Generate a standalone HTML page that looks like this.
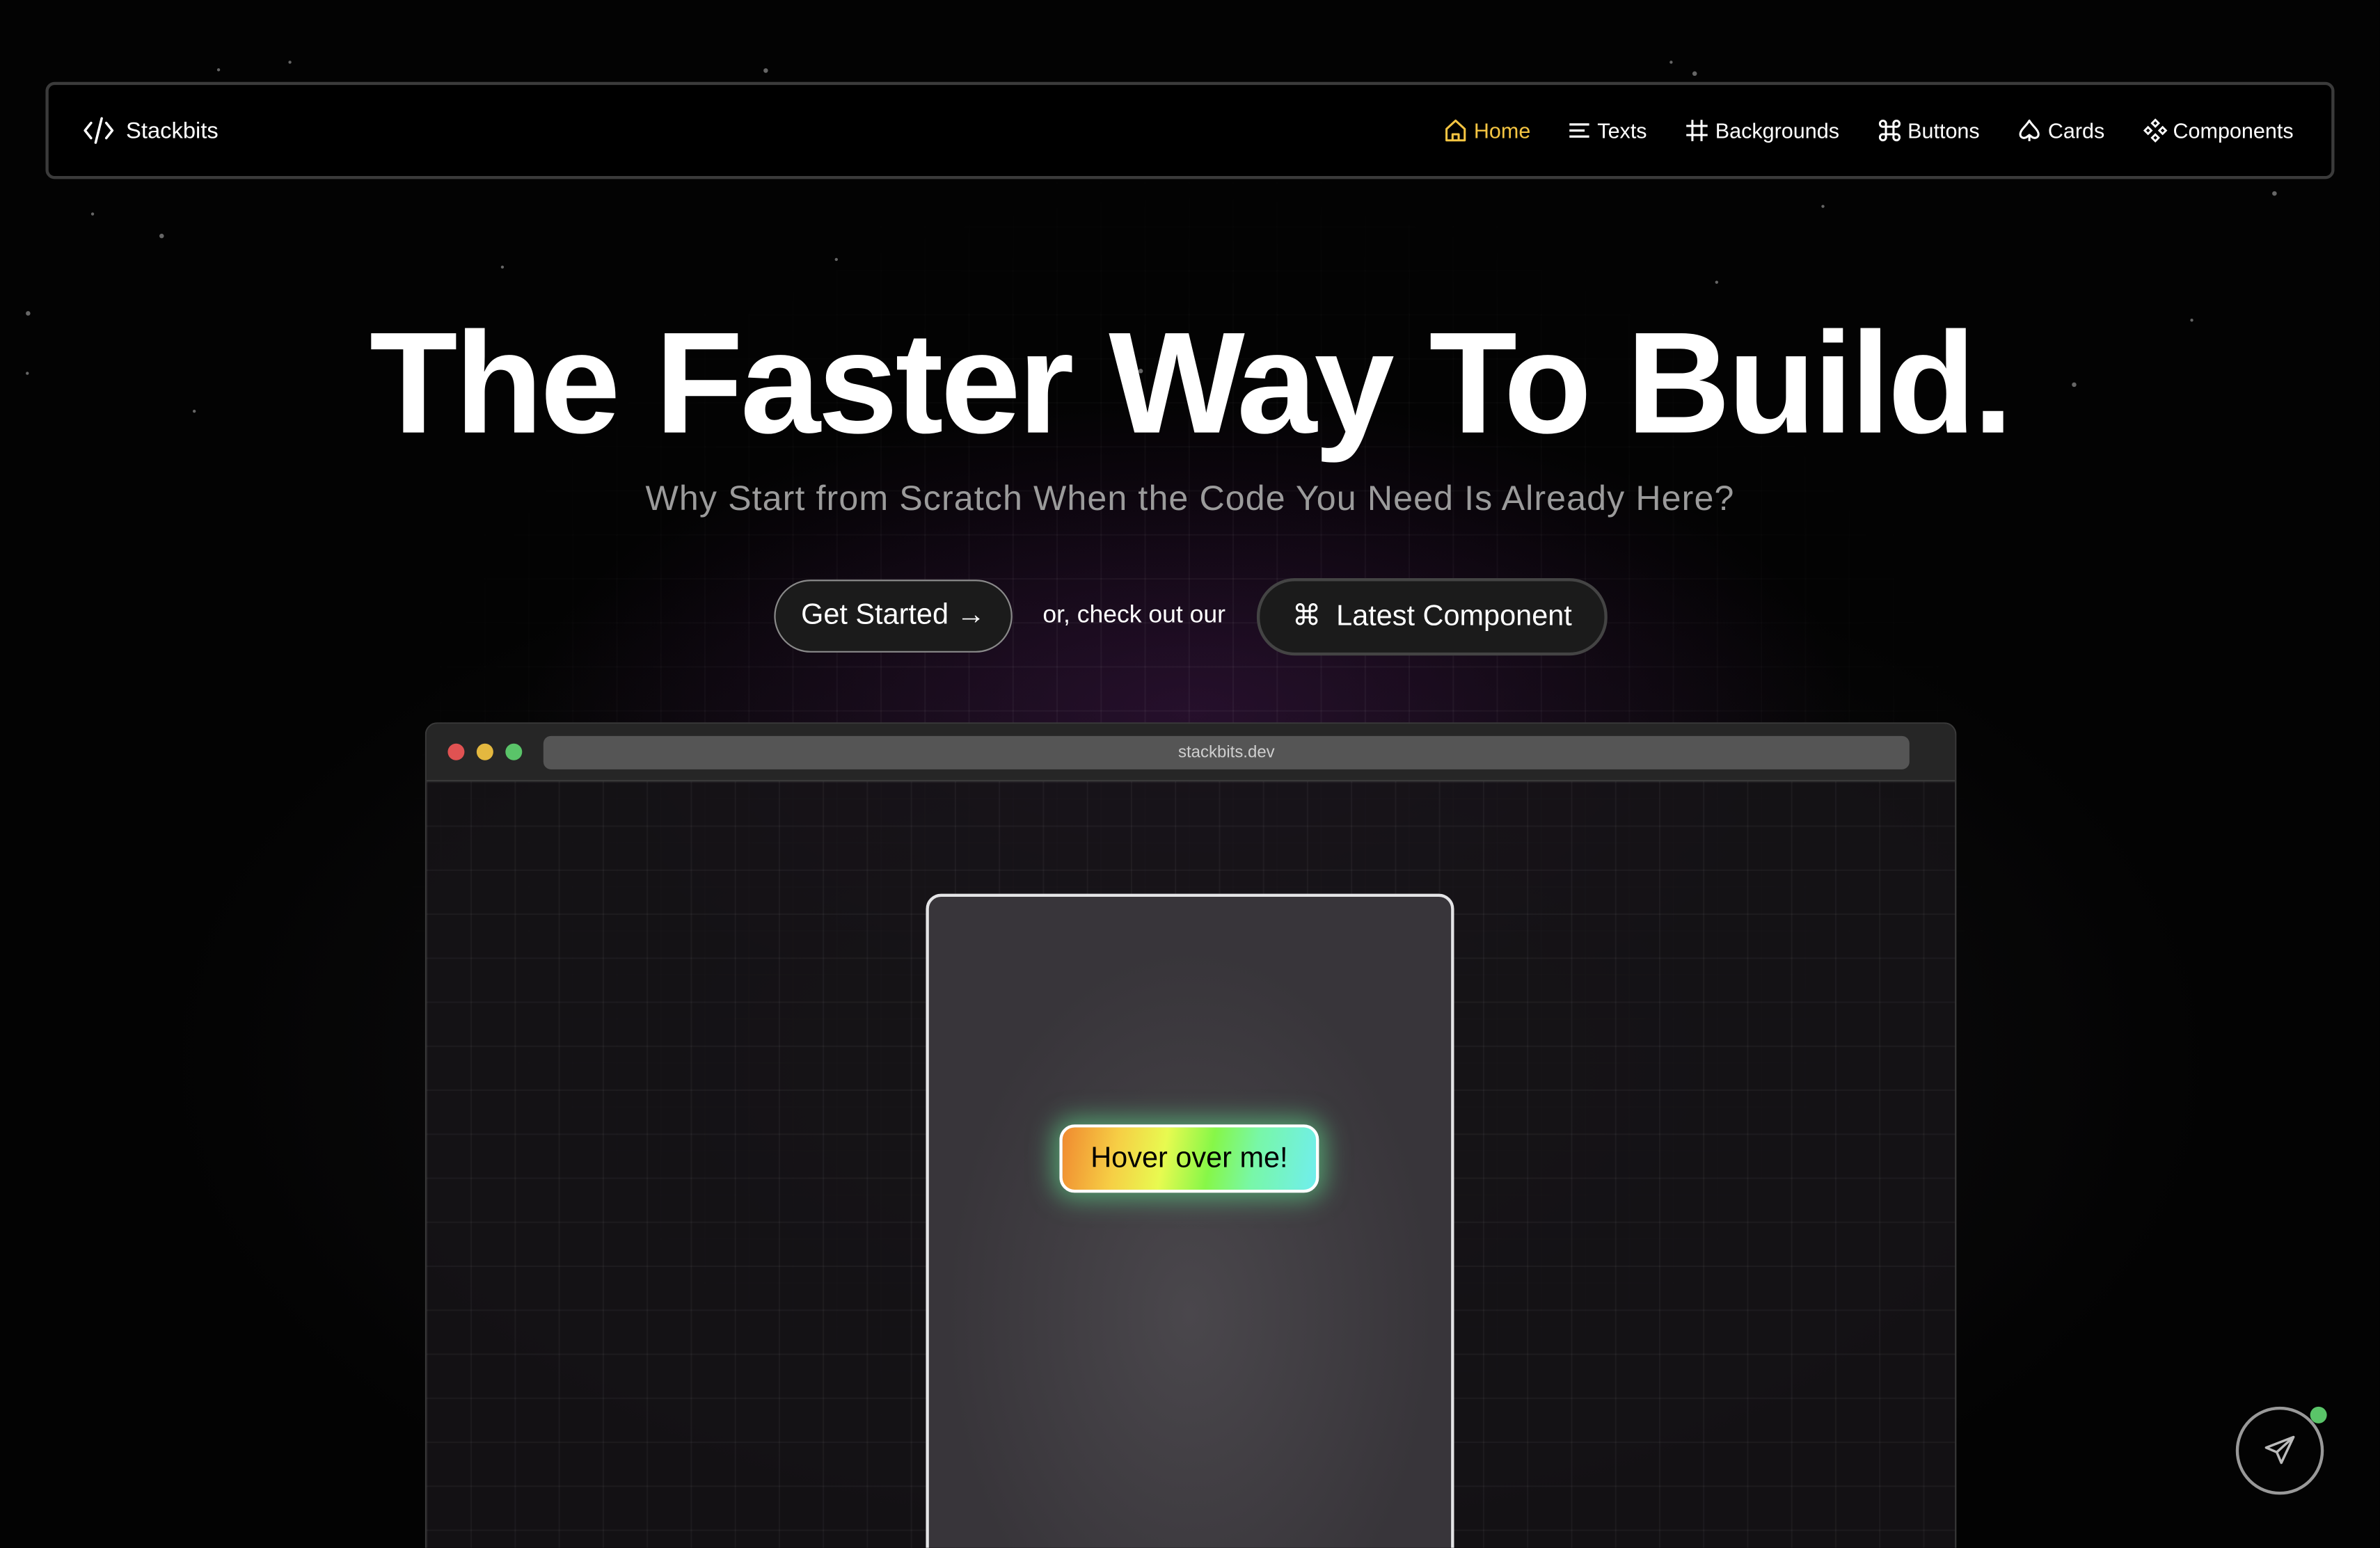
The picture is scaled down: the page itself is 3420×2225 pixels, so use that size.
<!DOCTYPE html>
<html><head><meta charset="utf-8"><style>
html,body{margin:0;padding:0;background:#000;overflow:hidden;width:3420px;height:2224px}
#s{position:absolute;left:0;top:0;width:1568px;height:1020px;transform:scale(2.1811);transform-origin:0 0;font-family:"Liberation Sans",sans-serif;color:#fff;overflow:hidden;
background:radial-gradient(ellipse 620px 300px at 784px 470px,rgba(60,20,70,.55),rgba(0,0,0,0) 70%),radial-gradient(ellipse 900px 500px at 784px 700px,rgba(30,28,32,.7),rgba(0,0,0,0) 75%),#030303}
.grid{position:absolute;left:0;top:120px;width:1568px;height:900px;background-image:linear-gradient(rgba(255,255,255,.045) 1px,transparent 1px),linear-gradient(90deg,rgba(255,255,255,.045) 1px,transparent 1px);background-size:29px 29px;-webkit-mask-image:radial-gradient(ellipse 700px 600px at 784px 450px,#000 30%,transparent 80%)}
.star{position:absolute;width:2px;height:2px;border-radius:50%;background:#666}
.nav{position:absolute;left:30px;top:54px;width:1504px;height:60px;border:2px solid #3b3b3b;border-radius:6px;background:#000}
.logo{position:absolute;left:22px;top:21px;font-size:15px;display:flex;align-items:center;gap:7px}
.items{position:absolute;right:25px;top:22px;display:flex;gap:25px;font-size:14px}
.items span{display:flex;align-items:center;gap:4px}
svg{display:block}
h1{position:absolute;left:0;width:1568px;top:198px;margin:0;text-align:center;font-size:95px;letter-spacing:-1.8px;font-weight:700;line-height:110px}
.sub{position:absolute;left:0;width:1568px;top:315px;text-align:center;font-size:23px;letter-spacing:.5px;color:#9b9b9b}
.btn{position:absolute;height:46px;border-radius:25px;background:#1b1b1b;border:1.5px solid #8a8a8a;display:flex;align-items:center;justify-content:center;font-size:19px}
.win{position:absolute;left:280px;top:476px;width:1007px;height:544px;border:1px solid #3a3a3a;border-bottom:none;border-radius:8px 8px 0 0;background:rgba(22,20,24,.85);overflow:hidden}
.bar{height:37px;background:#262626;border-bottom:1.5px solid #3a3a3a;position:relative}
.dot{position:absolute;top:13px;width:11px;height:11px;border-radius:50%}
.url{position:absolute;left:77px;top:8px;width:900px;height:22px;border-radius:5px;background:#555;color:#cfcfcf;font-size:11px;text-align:center;line-height:22px}
.wgrid{position:absolute;left:0;top:38px;right:0;bottom:0;background-image:linear-gradient(rgba(255,255,255,.04) 1px,transparent 1px),linear-gradient(90deg,rgba(255,255,255,.04) 1px,transparent 1px);background-size:29px 29px}
.card{position:absolute;left:329px;top:112px;width:344px;height:500px;border:2px solid #e4e4e6;border-radius:10px;background:radial-gradient(ellipse 200px 300px at 50% 55%,#4a474c,#38353a 80%)}
.hov{position:absolute;left:86px;top:150px;width:167px;height:41px;border:2px solid #fff;border-radius:10px;background:linear-gradient(100deg,#f08a30 0%,#f6cf45 22%,#e8fa50 40%,#86f748 58%,#78f7a8 75%,#70eeee 100%);box-shadow:0 0 16px 4px rgba(100,240,150,.55);color:#000;font-size:19px;text-align:center;line-height:41px}
</style></head><body><div id="s">
<div class="grid"></div>
<div class="star" style="left:143px;top:45px"></div><div class="star" style="left:503px;top:45px;width:3px;height:3px"></div><div class="star" style="left:190px;top:40px"></div><div class="star" style="left:1100px;top:40px"></div><div class="star" style="left:1115px;top:47px;width:3px;height:3px"></div><div class="star" style="left:17px;top:205px;width:3px;height:3px"></div><div class="star" style="left:60px;top:140px"></div><div class="star" style="left:105px;top:154px;width:3px;height:3px"></div><div class="star" style="left:1497px;top:126px;width:3px;height:3px"></div><div class="star" style="left:1200px;top:135px"></div><div class="star" style="left:1443px;top:210px"></div><div class="star" style="left:1365px;top:252px;width:3px;height:3px"></div><div class="star" style="left:750px;top:243px;width:3px;height:3px"></div><div class="star" style="left:550px;top:170px"></div><div class="star" style="left:330px;top:175px"></div><div class="star" style="left:17px;top:245px"></div><div class="star" style="left:1130px;top:185px"></div><div class="star" style="left:127px;top:270px"></div>
<div class="nav">
<div class="logo"><svg width="22" height="18" viewBox="0 0 22 18" fill="none" stroke="#fff" stroke-width="1.6" stroke-linecap="round" stroke-linejoin="round"><path d="M6 4L2 9l4 5M16 4l4 5-4 5M13 1L9 17"/></svg>Stackbits</div>
<div class="items">
<span style="color:#f5c542"><svg width="16" height="16" viewBox="0 0 16 16" fill="none" stroke="#f5c542" stroke-width="1.4" stroke-linejoin="round"><path d="M2 7L8 1.5 14 7v7.5H2z M6 14.5v-4h4v4"/></svg>Home</span>
<span><svg width="15" height="14" viewBox="0 0 15 14" stroke="#fff" stroke-width="1.5"><path d="M1 3h13M1 7h10M1 11h13"/></svg>Texts</span>
<span><svg width="16" height="16" viewBox="0 0 16 16" stroke="#fff" stroke-width="1.4"><path d="M5 1v14M11 1v14M1 5h14M1 11h14"/></svg>Backgrounds</span>
<span><svg width="16" height="16" viewBox="0 0 16 16" fill="none" stroke="#fff" stroke-width="1.4"><path d="M5.5 5.5h5v5h-5z M5.5 5.5H4A2 2 0 1 1 5.5 4v1.5 M10.5 5.5V4A2 2 0 1 1 12 5.5h-1.5 M10.5 10.5H12A2 2 0 1 1 10.5 12v-1.5 M5.5 10.5V12A2 2 0 1 1 4 10.5h1.5"/></svg>Buttons</span>
<span><svg width="16" height="16" viewBox="0 0 16 16" fill="none" stroke="#fff" stroke-width="1.4" stroke-linejoin="round"><path d="M8 1.5C6 5 2 7.5 2 10.5 2 12.5 4 13.5 6 12.5L8 11l2 1.5c2 1 4 0 4-2C14 7.5 10 5 8 1.5zM8 11v4"/></svg>Cards</span>
<span><svg width="16" height="16" viewBox="0 0 16 16" fill="none" stroke="#fff" stroke-width="1.3"><path d="M8 1l2.2 2.2L8 5.4 5.8 3.2zM8 10.6l2.2 2.2L8 15l-2.2-2.2zM3.2 5.8L5.4 8 3.2 10.2 1 8zM12.8 5.8L15 8l-2.2 2.2L10.6 8z"/></svg>Components</span>
</div></div>
<h1>The Faster Way To Build.</h1>
<div class="sub">Why Start from Scratch When the Code You Need Is Already Here?</div>
<div class="btn" style="left:510px;top:382px;width:155px">Get Started →</div>
<div style="position:absolute;left:687px;top:396px;font-size:16.3px">or, check out our</div>
<div class="btn" style="left:828px;top:381px;width:227px;border:2px solid #444;height:47px"><span style="font-size:19px;margin-right:10px">⌘</span>Latest Component</div>
<div class="win"><div class="bar"><div class="dot" style="left:14px;background:#e05252"></div><div class="dot" style="left:33px;background:#e4b83f"></div><div class="dot" style="left:52px;background:#5ac469"></div><div class="url">stackbits.dev</div></div>
<div class="wgrid"></div>
<div class="card"><div class="hov">Hover over me!</div></div></div>
<div style="position:absolute;left:1473px;top:927px;width:54px;height:54px;border:2px solid #999;border-radius:50%"><svg style="position:absolute;left:15px;top:15px" width="24" height="24" viewBox="0 0 24 24" fill="none" stroke="#bbb" stroke-width="1.6" stroke-linejoin="round"><path d="M21 3L3 10l7 3 3 7z M21 3L10 13"/></svg></div>
<div style="position:absolute;left:1522px;top:927px;width:11px;height:11px;border-radius:50%;background:#5ac469"></div>
</div></body></html>
